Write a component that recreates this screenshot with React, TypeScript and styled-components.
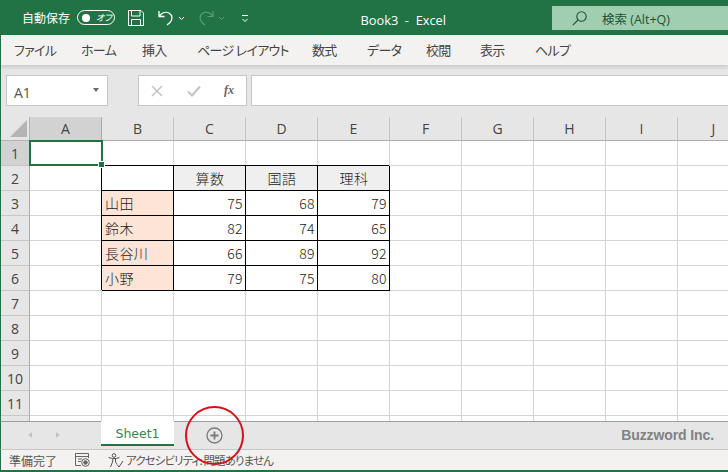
import styled, {createGlobalStyle} from "styled-components";

const GlobalStyle = createGlobalStyle`
  html, body {
    margin: 0;
    padding: 0;
    width: 728px;
    height: 472px;
    overflow: hidden;
    background: #fff;
    font-family: "Open Sans", "Noto Sans CJK JP", sans-serif;
  }
  * {
    box-sizing: border-box;
  }
`

const Page = styled.div`
  position: relative;
  width: 728px;
  height: 472px;
  display: flex;
  flex-direction: column;
  overflow: hidden;
`

const TitleBar = styled.div`
  height: 35px;
  flex: none;
  background: #217346;
  color: #fff;
  display: flex;
  align-items: center;
  padding-left: 22px;
`

const AutoSave = styled.span`
  font: 400 12px "Noto Sans CJK JP", sans-serif;
  width: 55px;
  flex: none;
`

const Toggle = styled.span`
  width: 38px;
  height: 15px;
  flex: none;
  border: 1px solid #fff;
  border-radius: 8px;
  display: flex;
  align-items: center;
  padding: 0 0 0 4px;
  gap: 6px;
  font: italic 400 9px "Noto Sans CJK JP", sans-serif;
  font-feature-settings: "palt";
  white-space: nowrap;
  margin-right: 13px;
`

const ToggleKnob = styled.span`
  width: 8px;
  height: 8px;
  border-radius: 50%;
  background: #fff;
`

const QuickIcon = styled.svg<{$space: number}>`
  flex: none;
  margin-right: ${p => p.$space}px;
`

const Title = styled.div`
  flex: none;
  width: 303px;
  font-size: 12.8px;
  text-align: right;
  padding-right: 106px;
  padding-top: 4px;
  white-space: pre;
`

const SearchBox = styled.div`
  flex: none;
  align-self: flex-start;
  width: 176px;
  height: 24px;
  margin-top: 6px;
  background: #9fcfb0;
  color: #24513a;
  display: flex;
  align-items: center;
  padding-left: 20px;
  gap: 15px;
  font: 400 12.5px "Open Sans", "Noto Sans CJK JP", sans-serif;
`

const TabBar = styled.div`
  height: 30px;
  flex: none;
  background: #f3f2f1;
  display: flex;
  align-items: center;
  gap: 29px;
  padding: 0 0 1px 13px;
  font: 400 13px "Noto Sans CJK JP", sans-serif;
  font-feature-settings: "palt";
  letter-spacing: -0.7px;
  color: #444;
  box-shadow: 0 2px 4px rgba(0, 0, 0, 0.14);
  position: relative;
  z-index: 1;
  border-left: 1px solid #217346;
`

const Tab = styled.span<{$width: number}>`
  flex: none;
  width: ${p => p.$width}px;
  white-space: nowrap;
`

const FormulaBar = styled.div`
  height: 52px;
  flex: none;
  background: #e6e6e6;
  display: flex;
  align-items: flex-end;
  padding: 0 0 11px 5px;
  border-left: 1px solid #217346;
`

const FieldBox = styled.div<{$width: number}>`
  width: ${p => p.$width}px;
  height: 31px;
  flex: none;
  background: #fff;
  border: 1px solid #c6c6c6;
  display: flex;
  align-items: center;
`

const NameBox = styled(FieldBox)`
  justify-content: space-between;
  padding: 4px 8px 0 7px;
  font-size: 14px;
  color: #555;
  margin-right: 13px;
`

const Caret = styled.span`
  width: 0;
  height: 0;
  border-left: 3.5px solid transparent;
  border-right: 3.5px solid transparent;
  border-top: 4px solid #6a6a6a;
  margin-top: -5px;
`

const Dots = styled.span`
  width: 2px;
  height: 11px;
  margin: 0 16px 9px 1px;
  background: repeating-linear-gradient(#b4b4b4 0 2px, transparent 2px 4.5px);
`

const ActionBox = styled(FieldBox)`
  justify-content: space-between;
  padding: 0 12px 0 12px;
  margin-right: 4px;
`

const Fx = styled.span`
  font: italic 700 12px "Liberation Serif", serif;
  color: #666;
`

const Sheet = styled.div`
  height: 304px;
  flex: none;
  overflow: hidden;
  display: grid;
  grid-template-columns: 29px repeat(10, 72px);
  grid-template-rows: 24px repeat(12, 25px);
  border-left: 1px solid #217346;
  position: relative;
`

const Corner = styled.div`
  background: #e6e6e6;
  border-right: 1px solid #b4b4b4;
  border-bottom: 1px solid #b4b4b4;
  display: flex;
  align-items: flex-end;
  justify-content: flex-end;
  padding: 0 2px 3px 0;
`

const ColHead = styled.div<{$active?: boolean}>`
  background: ${p => (p.$active ? "#d2d2d2" : "#e6e6e6")};
  border-bottom: 1px solid #ababab;
  border-right: 1px solid ${p => (p.$active ? "#ababab" : "#c6c6c6")};
  color: #444;
  font-size: 14px;
  display: flex;
  align-items: center;
  justify-content: center;
`

const RowHead = styled.div<{$active?: boolean}>`
  background: ${p => (p.$active ? "#d2d2d2" : "#e6e6e6")};
  border-right: 1px solid #ababab;
  border-bottom: 1px solid #c6c6c6;
  color: #444;
  font-size: 14px;
  display: flex;
  align-items: center;
  justify-content: center;
`

const Cell = styled.div<{$boxed?: boolean; $fill?: string; $align?: string}>`
  position: relative;
  border-right: 1px solid ${p => (p.$boxed ? "#000" : "#d4d4d4")};
  border-bottom: 1px solid ${p => (p.$boxed ? "#000" : "#d4d4d4")};
  box-shadow: ${p => (p.$boxed ? "-1px -1px 0 #000" : "none")};
  background: ${p => p.$fill || "transparent"};
  display: flex;
  align-items: center;
  justify-content: ${p => p.$align || "flex-start"};
  padding: 0 2px 0 3px;
  color: #222;
  font: 300 14px "Noto Sans CJK JP", sans-serif;
  letter-spacing: 0.4px;
`

const Selection = styled.div`
  position: absolute;
  left: -1px;
  top: -1px;
  right: -2px;
  bottom: -1px;
  border: 2px solid #217346;
  z-index: 2;
  &::after {
    content: "";
    position: absolute;
    right: -3px;
    bottom: -3px;
    width: 5px;
    height: 5px;
    background: #217346;
    border: 1px solid #fff;
    box-sizing: content-box;
    margin: -1px;
  }
`

const SheetBar = styled.div`
  height: 29px;
  flex: none;
  background: #e6e6e6;
  border-top: 1px solid #9e9e9e;
  border-bottom: 1px solid #c6c6c6;
  border-left: 1px solid #217346;
  display: flex;
  align-items: flex-start;
  padding-left: 27px;
`

const ScrollArrow = styled.span<{$left?: boolean}>`
  width: 0;
  height: 0;
  margin: 10px 0 0;
  border-top: 3.5px solid transparent;
  border-bottom: 3.5px solid transparent;
  ${p => (p.$left ? "border-right: 4px solid #c4c4c4;" : "border-left: 4px solid #c4c4c4;")}
`

const ArrowGroup = styled.div`
  width: 73px;
  display: flex;
  gap: 24px;
`

const SheetTab = styled.div`
  width: 73px;
  height: 25px;
  background: #fff;
  border-bottom: 2px solid #217346;
  color: #3d7f5c;
  font: 400 12.5px "DejaVu Sans", sans-serif;
  text-align: center;
  line-height: 25px;
  margin-top: -1px;
`

const AddSheet = styled.svg`
  margin: 5px 0 0 32px;
`

const Brand = styled.div`
  margin-left: auto;
  margin-right: 14px;
  margin-top: 5px;
  font: 700 14px "Liberation Sans", sans-serif;
  color: #828282;
  letter-spacing: -0.1px;
`

const StatusBar = styled.div`
  height: 22px;
  flex: none;
  background: #f3f2f1;
  border-bottom: 2px solid #217346;
  border-left: 1px solid #217346;
  display: flex;
  align-items: center;
  padding-left: 8px;
  font: 400 12px "Noto Sans CJK JP", sans-serif;
  color: #555;
`

const ReadyText = styled.span`
  width: 66px;
  flex: none;
  white-space: nowrap;
`

const AccessText = styled.span`
  white-space: nowrap;
  font-size: 11.5px;
  font-feature-settings: "palt";
  letter-spacing: -0.9px;
`

const StatusIcon = styled.svg<{$space: number}>`
  flex: none;
  margin-right: ${p => p.$space}px;
`

const RedCircle = styled.div`
  position: absolute;
  left: 185px;
  top: 406px;
  width: 59px;
  height: 59px;
  border: 2px solid #d0121b;
  border-radius: 50%;
  z-index: 3;
`

const colLabels = ["A", "B", "C", "D", "E", "F", "G", "H", "I", "J"];

const tabs: [string, number][] = [
    ["ファイル", 38],
    ["ホーム", 32],
    ["挿入", 26],
    ["ページ レイアウト", 86],
    ["数式", 26],
    ["データ", 30],
    ["校閲", 25],
    ["表示", 26],
    ["ヘルプ", 32],
];

// 表の中身 (行2〜6, 列B〜E)
const scores: Record<number, string[]> = {
    2: ["", "算数", "国語", "理科"],
    3: ["山田", "75", "68", "79"],
    4: ["鈴木", "82", "74", "65"],
    5: ["長谷川", "66", "89", "92"],
    6: ["小野", "79", "75", "80"],
};

function renderCell(row: number, col: number) {
    const values = scores[row];
    if (!values || col < 1 || col > 4) {
        return (
            <Cell key={`${row}-${col}`}>
                {row === 1 && col === 0 && <Selection/>}
            </Cell>
        );
    }
    const value = values[col - 1];
    let fill: string | undefined;
    let align = "flex-start";
    if (row === 2) {
        if (col > 1) fill = "#efefef";
        align = "center";
    } else if (col === 1) {
        fill = "#fce4d6";
    } else {
        align = "flex-end";
    }
    return <Cell key={`${row}-${col}`} $boxed $fill={fill} $align={align}>{value}</Cell>;
}

function App() {
    const rows = Array.from({length: 12}, (_, i) => i + 1);

    return (
        <Page>
            <GlobalStyle/>
            <TitleBar>
                <AutoSave>自動保存</AutoSave>
                <Toggle><ToggleKnob/>オフ</Toggle>
                <QuickIcon $space={14} width="16" height="16" viewBox="0 0 16 16" fill="none" stroke="#fff">
                    <path d="M0.5 0.5H13L15.5 3V15.5H0.5Z M3.5 0.5V6H12V0.5 M3.5 15.5V9.5H12.5V15.5"/>
                </QuickIcon>
                <QuickIcon $space={4} width="16" height="16" viewBox="0 0 16 16" fill="none" stroke="#fff" strokeWidth="1.3">
                    <path d="M1 1V6.5H6.5 M1.5 6C4 2.5 8 1.5 11 3C14.5 5 15 9.5 12 12.5L9 15"/>
                </QuickIcon>
                <QuickIcon $space={13} width="7" height="16" viewBox="0 0 7 16" fill="none" stroke="#fff">
                    <path d="M1 7L3.5 9.5L6 7"/>
                </QuickIcon>
                <QuickIcon $space={4} width="16" height="16" viewBox="0 0 16 16" fill="none" stroke="#5f9c7c" strokeWidth="1.2">
                    <path d="M15 1V6.5H9.5 M14.5 6C12 2.5 8 1.5 5 3C1.5 5 1 9.5 4 12.5L7 15"/>
                </QuickIcon>
                <QuickIcon $space={16} width="7" height="16" viewBox="0 0 7 16" fill="none" stroke="#5f9c7c">
                    <path d="M1 7L3.5 9.5L6 7"/>
                </QuickIcon>
                <QuickIcon $space={0} width="8" height="16" viewBox="0 0 8 16" fill="none" stroke="#fff">
                    <path d="M1 5.5H7 M1.5 9L4 11.5L6.5 9"/>
                </QuickIcon>
                <Title>{"Book3  -  Excel"}</Title>
                <SearchBox>
                    <svg width="15" height="15" viewBox="0 0 15 15" fill="none" stroke="#24513a" strokeWidth="1.1">
                        <circle cx="9.5" cy="5.5" r="4.7"/>
                        <path d="M6 9L0.8 14.2"/>
                    </svg>
                    検索 (Alt+Q)
                </SearchBox>
            </TitleBar>

            <TabBar>
                {tabs.map(([label, width]) => (
                    <Tab key={label} $width={width}>{label}</Tab>
                ))}
            </TabBar>

            <FormulaBar>
                <NameBox $width={102}>A1<Caret/></NameBox>
                <Dots/>
                <ActionBox $width={109}>
                    <svg width="12" height="12" viewBox="0 0 12 12" fill="none" stroke="#c4c4c4" strokeWidth="1.5">
                        <path d="M1 1L11 11 M11 1L1 11"/>
                    </svg>
                    <svg width="14" height="12" viewBox="0 0 14 12" fill="none" stroke="#c4c4c4" strokeWidth="2">
                        <path d="M1 6.5L5 10.5L13 1.5"/>
                    </svg>
                    <Fx>fx</Fx>
                </ActionBox>
                <FieldBox $width={480}/>
            </FormulaBar>

            <Sheet>
                <Corner>
                    <svg width="17" height="17" viewBox="0 0 17 17">
                        <path d="M17 0V17H0Z" fill="#b4b4b4"/>
                    </svg>
                </Corner>
                {colLabels.map((label, i) => (
                    <ColHead key={label} $active={i === 0}>{label}</ColHead>
                ))}
                {rows.map(row => [
                    <RowHead key={`head-${row}`} $active={row === 1}>{row < 12 ? row : ""}</RowHead>,
                    ...colLabels.map((_, col) => renderCell(row, col)),
                ])}
            </Sheet>

            <SheetBar>
                <ArrowGroup>
                    <ScrollArrow $left/>
                    <ScrollArrow/>
                </ArrowGroup>
                <SheetTab>Sheet1</SheetTab>
                <AddSheet width="17" height="17" viewBox="0 0 17 17" fill="none" stroke="#7a7a7a">
                    <circle cx="8.5" cy="8.5" r="7.5" strokeWidth="1.3"/>
                    <path d="M4.5 8.5H12.5 M8.5 4.5V12.5" strokeWidth="1.8"/>
                </AddSheet>
                <Brand>Buzzword Inc.</Brand>
            </SheetBar>

            <StatusBar>
                <ReadyText>準備完了</ReadyText>
                <StatusIcon $space={18} width="15" height="14" viewBox="0 0 15 14" fill="none" stroke="#666">
                    <path d="M0.5 0.5H13.5V5 M0.5 0.5V12.5H6 M0.5 3.5H13.5 M3 6H7 M3 8.5H6"/>
                    <circle cx="10.5" cy="9.5" r="3.8"/>
                    <circle cx="10.5" cy="9.5" r="1.8" fill="#666"/>
                </StatusIcon>
                <StatusIcon $space={2} width="16" height="15" viewBox="0 0 16 15" fill="none" stroke="#555">
                    <circle cx="6" cy="2.5" r="1.8"/>
                    <path d="M0.5 4.5L4.5 5.5H8L11.5 4.5 M5 5.5L4.5 9L2.5 14 M7.5 5.5V9L9 11 M9 11.5L11 14L15 8"/>
                </StatusIcon>
                <AccessText>アクセシビリティ: 問題ありません</AccessText>
            </StatusBar>

            <RedCircle/>
        </Page>
    );
}

export default App;
